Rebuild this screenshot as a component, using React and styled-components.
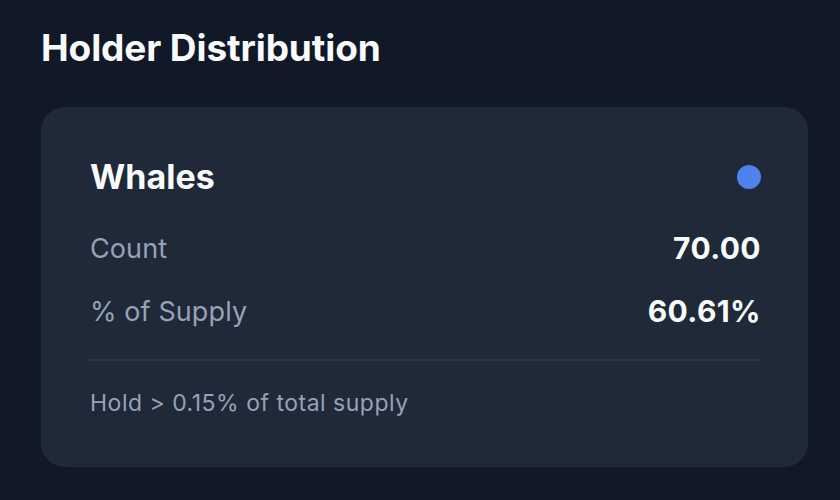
import styled, { createGlobalStyle } from 'styled-components';

const GlobalStyle = createGlobalStyle`
  html, body {
    margin: 0;
    background: #111827;
  }

  body {
    font-family: Inter, "Noto Sans", sans-serif;
  }
`;

const Page = styled.div`
  width: 840px;
  height: 500px;
  box-sizing: border-box;
  padding: 26px 32px 0 41px;
  background: #111827;
`;

const Title = styled.h2`
  margin: 0 0 37px;
  color: #f8fafc;
  font-size: 37px;
  font-weight: 700;
  line-height: 44px;
  letter-spacing: -0.1px;
`;

const Card = styled.div`
  box-sizing: border-box;
  width: 767px;
  padding: 50px 47px 49px 49px;
  border-radius: 24px;
  background: #1f2937;
`;

const Header = styled.div`
  display: flex;
  align-items: center;
  justify-content: space-between;
  height: 40px;
  margin-bottom: 33px;
`;

const Name = styled.h3`
  margin: 0;
  color: #f8fafc;
  font-size: 34px;
  font-weight: 700;
  line-height: 40px;
`;

const Dot = styled.span`
  width: 24px;
  height: 24px;
  border-radius: 50%;
  background: ${({ color }) => color};
`;

const Row = styled.div`
  display: flex;
  align-items: center;
  justify-content: space-between;
  height: 36px;
  margin-bottom: 27px;

  &:last-of-type {
    margin-bottom: 30px;
  }
`;

const Label = styled.span`
  color: #94a3b8;
  font-size: 27px;
  letter-spacing: 0.1px;
`;

const Value = styled.span`
  color: #f8fafc;
  font-size: 30px;
  font-weight: 700;
  letter-spacing: 0.4px;
`;

const Divider = styled.hr`
  margin: 0 0 27px;
  border: 0;
  border-top: 2px solid #2b3545;
`;

const Note = styled.p`
  margin: 0;
  color: #94a3b8;
  font-size: 23px;
  line-height: 30px;
  letter-spacing: 0.5px;
`;

const App = () => {
  return (
    <>
      <GlobalStyle />
      <Page>
        <Title>Holder Distribution</Title>
        <Card>
          <Header>
            <Name>Whales</Name>
            <Dot color="#4f82ee" />
          </Header>
          <Row>
            <Label>Count</Label>
            <Value>70.00</Value>
          </Row>
          <Row>
            <Label>% of Supply</Label>
            <Value>60.61%</Value>
          </Row>
          <Divider />
          <Note>Hold &gt; 0.15% of total supply</Note>
        </Card>
      </Page>
    </>
  );
};

export default App;
